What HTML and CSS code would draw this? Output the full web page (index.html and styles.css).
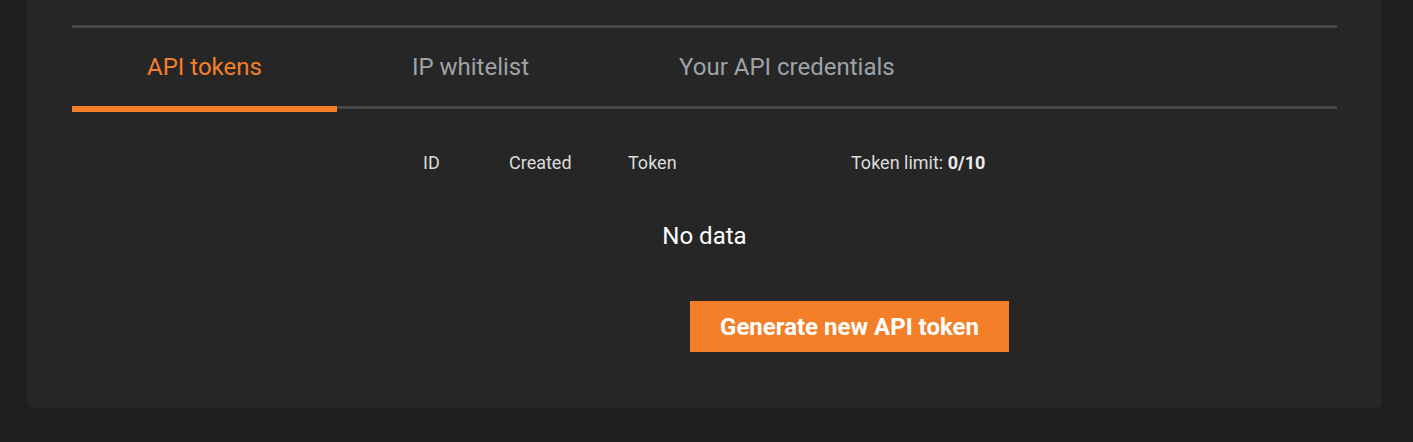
FILE: index.html
```html
<!DOCTYPE html>
<html lang="en">
<head>
<meta charset="utf-8">
<title>API tokens</title>
<link rel="stylesheet" href="styles.css">
</head>
<body>
<div class="card">
  <div class="tabs">
    <div class="tab active">API tokens</div>
    <div class="tab">IP whitelist</div>
    <div class="tab">Your API credentials</div>
  </div>
  <div class="panel">
    <div class="table-head">
      <div class="th">ID</div>
      <div class="th">Created</div>
      <div class="th">Token</div>
      <div class="th">Token limit: <b>0/10</b></div>
    </div>
    <div class="empty">No data</div>
    <div class="actions">
      <button class="btn">Generate new API token</button>
    </div>
  </div>
</div>
</body>
</html>
```
FILE: styles.css
```css
html, body {
  margin: 0;
  padding: 0;
  background: #1e1e1e;
  font-family: Roboto, "Liberation Sans", Arial, sans-serif;
}
.card {
  margin: 0 31px 0 27px;
  height: 408px;
  box-sizing: border-box;
  background: #262626;
  border-radius: 0 0 5px 5px;
  padding: 25px 45px 0 45px;
}
.tabs {
  display: flex;
  border-top: 3px solid #474747;
  border-bottom: 3px solid #474747;
}
.tab {
  height: 78px;
  padding: 0 75px;
  display: flex;
  align-items: center;
  font-size: 24px;
  color: #9ea3a8;
  position: relative;
}
.tab.active {
  color: #f47f29;
}
.tab.active::after {
  content: "";
  position: absolute;
  left: 0;
  right: 0;
  bottom: -6px;
  height: 6px;
  background: #f47f29;
}
.panel {
  width: 609px;
  margin: 0 auto;
  padding-top: 37px;
}
.table-head {
  display: grid;
  grid-template-columns: 86px 119px 223px 1fr;
  height: 32px;
  align-items: center;
}
.th {
  padding-left: 23px;
  font-size: 18px;
  color: #dcdcdc;
  white-space: nowrap;
}
.th b {
  font-weight: 700;
  color: #ececec;
}
.empty {
  text-align: center;
  font-size: 24px;
  color: #ffffff;
  margin-top: 44px;
  line-height: 28px;
}
.actions {
  display: flex;
  justify-content: flex-end;
  margin-top: 51px;
}
.btn {
  width: 319px;
  height: 51px;
  border: 0;
  border-radius: 0;
  background: #f47f29;
  color: #ffffff;
  font-family: Roboto, "Liberation Sans", Arial, sans-serif;
  font-size: 24px;
  font-weight: 700;
  cursor: pointer;
}
```
